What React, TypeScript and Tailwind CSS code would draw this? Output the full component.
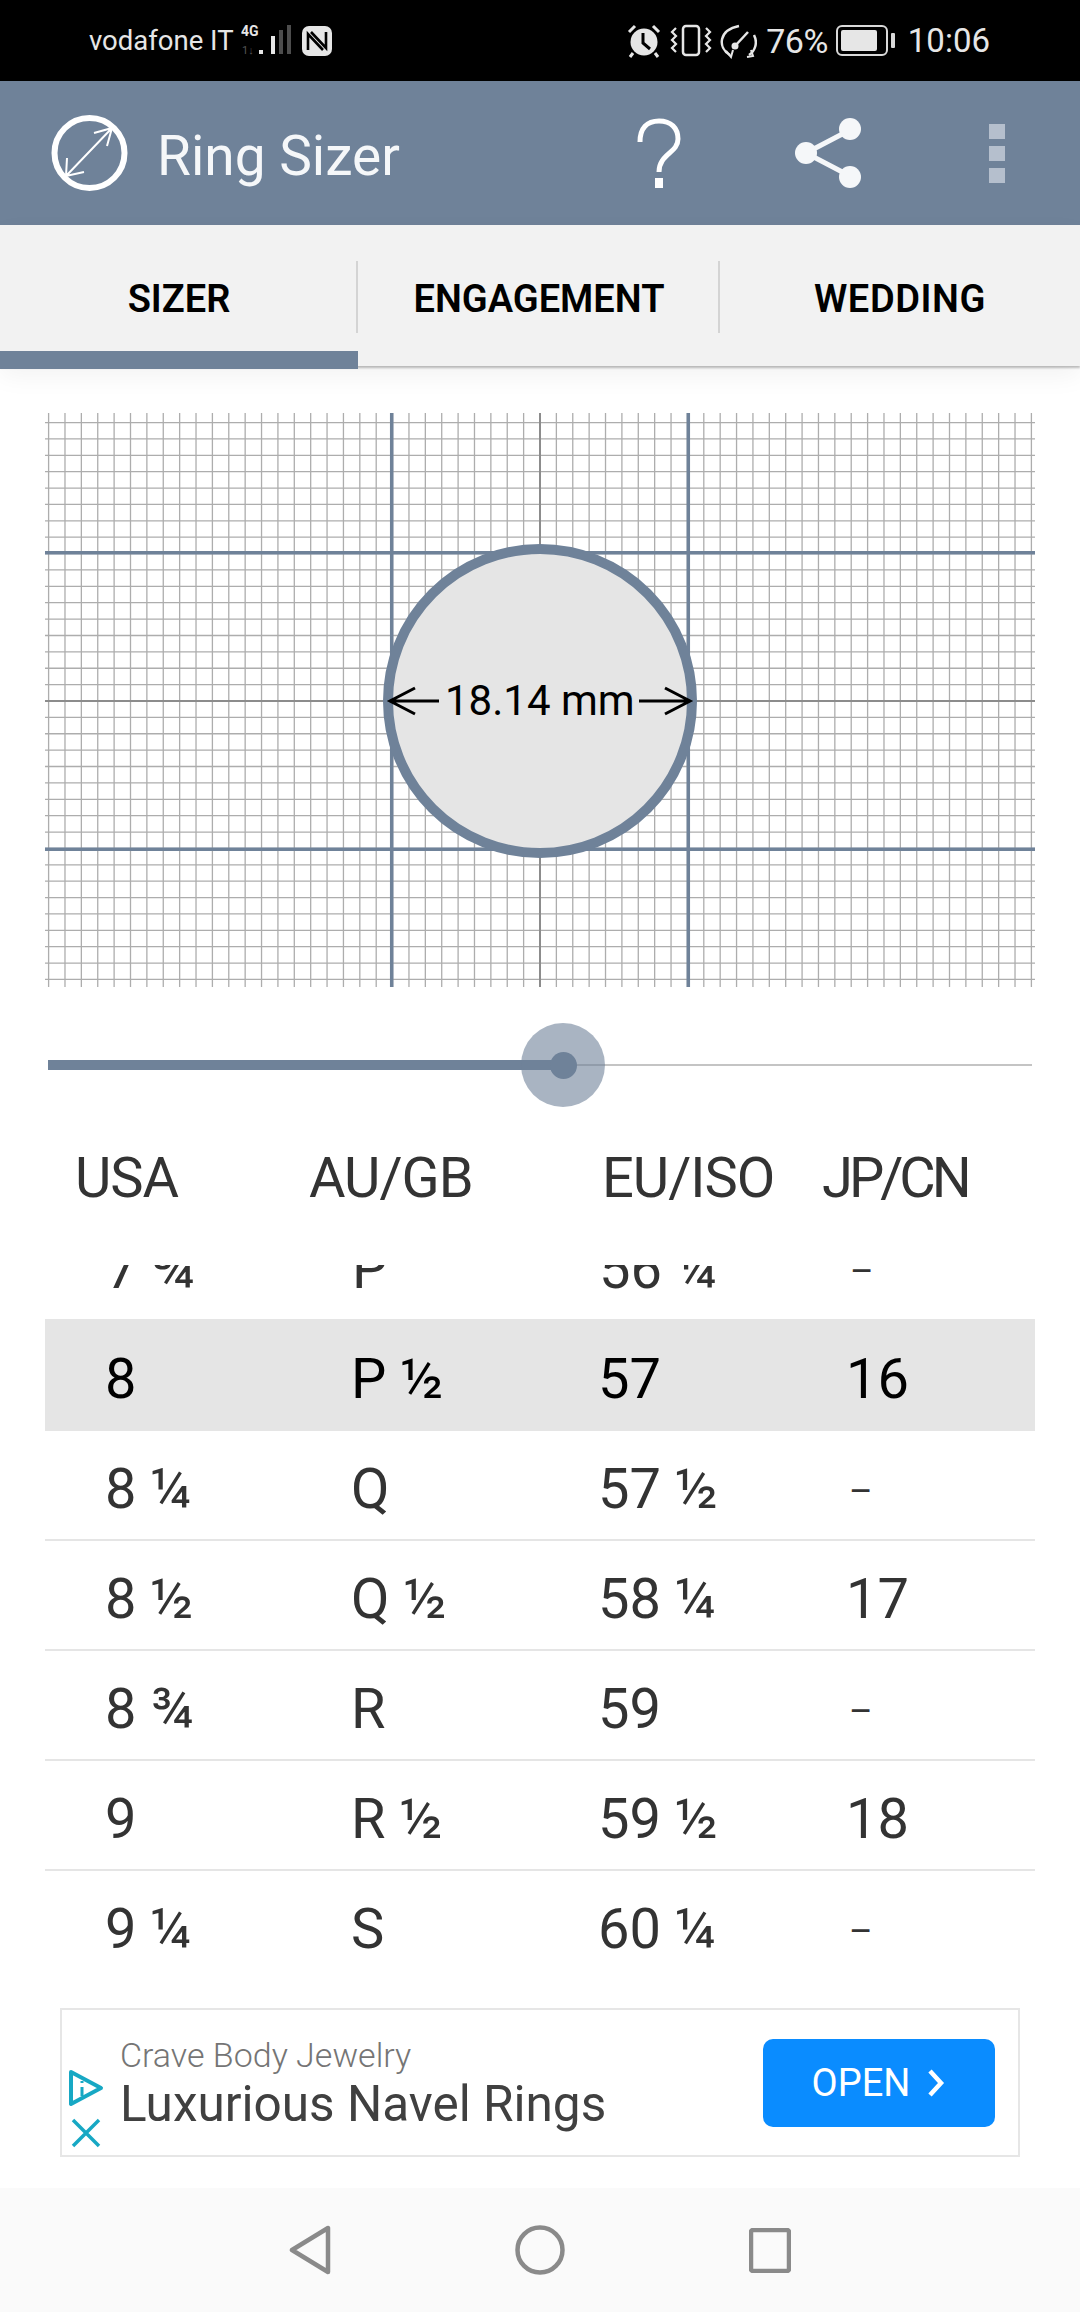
import React from 'react';

const SLATE = '#6f8299';

const rows = [
  { usa: '8', au: 'P ½', eu: '57', jp: '16', selected: true },
  { usa: '8 ¼', au: 'Q', eu: '57 ½', jp: '–' },
  { usa: '8 ½', au: 'Q ½', eu: '58 ¼', jp: '17' },
  { usa: '8 ¾', au: 'R', eu: '59', jp: '–' },
  { usa: '9', au: 'R ½', eu: '59 ½', jp: '18' },
  { usa: '9 ¼', au: 'S', eu: '60 ¼', jp: '–' },
];

// graph paper behind the ring, lines are counted out from the centre
const GridPaper: React.FC = () => {
  const w = 990;
  const h = 574;
  const cx = 495;
  const cy = 288;
  const step = 16.38;
  const major = 148.3;
  const minorX: number[] = [];
  const minorY: number[] = [];
  for (let i = -30; i <= 30; i++) minorX.push(cx + i * step);
  for (let i = -17; i <= 17; i++) minorY.push(cy + i * step);
  return (
    <svg width={w} height={h} viewBox={`0 0 ${w} ${h}`} className="block">
      {minorX.map(x => (
        <line key={x} x1={x} x2={x} y1={0} y2={h} stroke="#adadad" strokeWidth={1.3} />
      ))}
      {minorY.map(y => (
        <line key={y} x1={0} x2={w} y1={y} y2={y} stroke="#adadad" strokeWidth={1.3} />
      ))}
      <line x1={cx} x2={cx} y1={0} y2={h} stroke="#8c8c8c" strokeWidth={2} />
      <line x1={0} x2={w} y1={cy} y2={cy} stroke="#8c8c8c" strokeWidth={2} />
      <line x1={cx - major} x2={cx - major} y1={0} y2={h} stroke={SLATE} strokeWidth={3.5} />
      <line x1={cx + major} x2={cx + major} y1={0} y2={h} stroke={SLATE} strokeWidth={3.5} />
      <line x1={0} x2={w} y1={cy - major} y2={cy - major} stroke={SLATE} strokeWidth={3.5} />
      <line x1={0} x2={w} y1={cy + major} y2={cy + major} stroke={SLATE} strokeWidth={3.5} />
      <circle cx={cx} cy={cy} r={152} fill="#e5e5e5" stroke={SLATE} strokeWidth={10} />
      <path d="M 345 288 H 394 M 370 275 L 345 288 L 370 301 M 645 288 H 594 M 620 275 L 645 288 L 620 301" fill="none" stroke="#000" strokeWidth={3} />
    </svg>
  );
};

const StatusIcons: React.FC = () => (
  <svg width="130" height="36" viewBox="0 0 130 36" className="block" fill="none">
    {/* alarm */}
    <circle cx="17" cy="19" r="13.5" fill="#e6e6e6" />
    <path d="M16 10 V20 L23 26" stroke="#000" strokeWidth="3" />
    <path d="M2 9 L8 3 M32 9 L26 3 M6 30 L3 34 M28 30 L31 34" stroke="#e6e6e6" strokeWidth="3" />
    {/* vibrate */}
    <rect x="56" y="3" width="16" height="29" rx="3" stroke="#e6e6e6" strokeWidth="2.5" />
    <path d="M49 5 L45 9 L49 13 L45 17 L49 21 L45 25 L49 29 M79 5 L83 9 L79 13 L83 17 L79 21 L83 25 L79 29" stroke="#e6e6e6" strokeWidth="2.2" />
    {/* speed */}
    <path d="M103 32 C 90 24 92 7 112 3 M127 12 C 131 20 128 28 122 32" stroke="#e6e6e6" strokeWidth="2.5" />
    <path d="M99 28 L104 34 L106 27 M120 34 L126 33 L124 27" stroke="#e6e6e6" strokeWidth="2" />
    <circle cx="108" cy="23" r="3.5" fill="#e6e6e6" />
    <path d="M108 23 L121 9" stroke="#e6e6e6" strokeWidth="2.5" />
  </svg>
);

const App: React.FC = () => {
  return (
    <div className="w-[1080px] h-[2312px] overflow-hidden bg-white flex flex-col font-['Roboto',sans-serif]">
      {/* status bar */}
      <div className="h-[81px] shrink-0 bg-black flex items-center text-[#e6e6e6]">
        <div className="pl-[89px] flex items-center">
          <span className="text-[27.5px] leading-none">vodafone IT</span>
          <svg width="50" height="34" viewBox="0 0 50 34" className="ml-[7px]">
            <text x="0" y="12" fontSize="14" fontWeight="700" fill="#e6e6e6" fontFamily="Roboto, sans-serif">4G</text>
            <text x="1" y="30" fontSize="11" fill="#555" fontFamily="Roboto, sans-serif">1↓</text>
            <rect x="18" y="26" width="4" height="4" fill="#e6e6e6" />
            <rect x="30" y="12" width="4" height="18" fill="#e6e6e6" />
            <rect x="38" y="6" width="4" height="24" fill="#4d4d4d" />
            <rect x="46" y="1" width="4" height="29" fill="#4d4d4d" />
          </svg>
          <svg width="30" height="30" viewBox="0 0 30 30" className="ml-[11px]">
            <rect x="0" y="0" width="30" height="30" rx="7" fill="#e6e6e6" />
            <path d="M6 24 V8 L21 24 M24 6 V22 L9 6" fill="none" stroke="#000" strokeWidth="2.6" />
          </svg>
        </div>
        <div className="ml-auto pr-[90px] flex items-center">
          <StatusIcons />
          <span className="ml-[9px] text-[34px] leading-none tracking-[-0.5px]">76%</span>
          <div className="ml-[8px] w-[52px] h-[31px] border-2 border-[#d9d9d9] rounded-[6px] p-[3px]">
            <div className="w-[36px] h-full bg-[#e6e6e6] rounded-[2px]" />
          </div>
          <div className="ml-[3px] w-[4px] h-[15px] bg-[#d9d9d9] rounded-[1px]" />
          <span className="ml-[13px] text-[33px] leading-none">10:06</span>
        </div>
      </div>

      {/* action bar */}
      <div className="h-[144px] shrink-0 bg-[#6f8299] flex items-center text-white">
        <svg width="80" height="80" viewBox="0 0 80 80" className="ml-[50px]" fill="none">
          <circle cx="39.5" cy="40" r="35" stroke="#fff" strokeWidth="6" />
          <path d="M16 63 L62 15 M44 20 L62 15 L57 33 M17 45 L16 63 L34 59" stroke="#fff" strokeWidth="2" />
        </svg>
        <span className="ml-[27px] pt-[6px] text-[55px] leading-none text-[#f5f7f9]">Ring Sizer</span>
        <div className="ml-auto pr-[75px] flex items-center">
          <svg width="44" height="70" viewBox="0 0 44 70" fill="none">
            <path d="M3 24 C3 10 10 3 22 3 C34 3 41 10 41 21 C41 35 22 36 22 54" stroke="#fff" strokeWidth="5" />
            <rect x="18" y="60" width="8" height="10" fill="#fff" />
          </svg>
          <svg width="66" height="70" viewBox="0 0 66 70" className="ml-[114px]" fill="none">
            <path d="M55 12 L11 35 L55 58" stroke="#f5f7f9" strokeWidth="5" />
            <circle cx="55" cy="11" r="11" fill="#f5f7f9" />
            <circle cx="11" cy="35" r="11" fill="#f5f7f9" />
            <circle cx="55" cy="59" r="11" fill="#f5f7f9" />
          </svg>
          <div className="ml-[128px] flex flex-col gap-[7px]">
            <div className="w-[16px] h-[15px] bg-[#b5bfcd]" />
            <div className="w-[16px] h-[15px] bg-[#b5bfcd]" />
            <div className="w-[16px] h-[15px] bg-[#b5bfcd]" />
          </div>
        </div>
      </div>

      {/* tabs */}
      <div className="h-[141px] shrink-0 bg-[#f2f2f2] shadow-[0_2px_2px_rgba(0,0,0,0.25),0_10px_24px_rgba(0,0,0,0.05)] z-10 grid grid-cols-[358px_362px_1fr] relative">
        <div className="relative flex items-center justify-center pt-[6px]">
          <span className="text-[38px] font-semibold text-black leading-none">SIZER</span>
          <div className="absolute left-0 right-0 -bottom-[3px] h-[18px] bg-[#6f8299]" />
          <div className="absolute right-0 top-[36px] h-[72px] w-[2px] bg-[#d4d4d4]" />
        </div>
        <div className="relative flex items-center justify-center pt-[6px]">
          <span className="text-[38px] font-semibold text-black leading-none">ENGAGEMENT</span>
          <div className="absolute right-0 top-[36px] h-[72px] w-[2px] bg-[#d4d4d4]" />
        </div>
        <div className="flex items-center justify-center pt-[6px]">
          <span className="text-[38px] font-semibold text-black leading-none tracking-[0.6px]">WEDDING</span>
        </div>
      </div>

      {/* ring on the graph paper */}
      <div className="pt-[47px] pl-[45px] relative shrink-0">
        <GridPaper />
        <span className="absolute left-[445px] top-[308px] text-[42px] leading-[54px] text-black whitespace-nowrap">18.14 mm</span>
      </div>

      {/* slider */}
      <div className="relative h-[84px] mt-[36px] ml-[48px] w-[984px] shrink-0 flex items-center">
        <div className="h-[10px] w-[515px] bg-[#6f8299]" />
        <div className="h-[2px] flex-1 bg-[#c4c4c4]" />
        <div className="absolute left-[473px] top-0 w-[84px] h-[84px] rounded-full bg-[#6f8299]/60 flex items-center justify-center">
          <div className="w-[27px] h-[27px] rounded-full bg-[#6f8299]" />
        </div>
      </div>

      {/* column heads */}
      <div className="mt-[43px] h-[56px] shrink-0 relative text-[56px] leading-[56px] text-[#333]">
        <span className="absolute left-[75px] top-0 tracking-[-1px]">USA</span>
        <span className="absolute left-[309px] top-0 tracking-[-1px]">AU/GB</span>
        <span className="absolute left-[602px] top-0 tracking-[-1px]">EU/ISO</span>
        <span className="absolute left-[822px] top-0 tracking-[-4px]">JP/CN</span>
      </div>

      {/* list, scrolled so the first row is cut off */}
      <div className="mt-[59px] mx-[45px] h-[690px] overflow-hidden shrink-0">
        <div className="-mt-[54px]">
          <div className="h-[110px] pt-[8px] grid grid-cols-[246px_247px_248px_1fr] items-center border-b-2 border-[#e5e5e5] text-[56px] text-[#333] pl-[61px]">
            <span>7 ¾</span>
            <span>P</span>
            <span>56 ¼</span>
            <span className="text-[36px] pl-[3px] pt-[5px]">–</span>
          </div>
          {rows.map(r => (
            <div
              key={r.usa}
              className={r.selected
                ? 'h-[112px] pt-[8px] -mt-[2px] grid grid-cols-[246px_247px_248px_1fr] items-center bg-[#e5e5e5] text-[56px] text-black pl-[60px]'
                : 'h-[110px] pt-[8px] grid grid-cols-[246px_247px_248px_1fr] items-center border-b-2 border-[#e5e5e5] text-[56px] text-[#333] pl-[60px]'}
            >
              <span>{r.usa}</span>
              <span>{r.au}</span>
              <span>{r.eu}</span>
              {r.jp === '–' ? <span className="text-[36px] pl-[3px] pt-[5px]">–</span> : <span>{r.jp}</span>}
            </div>
          ))}
        </div>
      </div>

      {/* ad */}
      <div className="mt-[53px] mx-[60px] h-[149px] shrink-0 border-2 border-[#e6e6e6] bg-white flex items-center relative">
        <svg width="36" height="78" viewBox="0 0 36 78" className="absolute left-[7px] top-[60px]" fill="none">
          <path d="M2 2 L32 18 L2 34 Z" stroke="#17a8c4" strokeWidth="4" strokeLinejoin="round" />
          <path d="M13 11 V13 M13 17 V26" stroke="#17a8c4" strokeWidth="3" />
          <path d="M4 50 L30 76 M30 50 L4 76" stroke="#17a8c4" strokeWidth="3.5" />
        </svg>
        <div className="ml-[58px] flex flex-col">
          <span className="text-[34px] leading-[42px] text-[#757575] font-light">Crave Body Jewelry</span>
          <span className="text-[49.5px] leading-[56px] text-[#404040]">Luxurious Navel Rings</span>
        </div>
        <div className="absolute left-[701px] top-[29px] w-[232px] h-[88px] rounded-[10px] bg-[#0a8cff] flex items-center justify-center text-white">
          <span className="text-[38px] leading-none">OPEN</span>
          <svg width="20" height="30" viewBox="0 0 20 30" className="ml-[16px]" fill="none">
            <path d="M4 3 L15 15 L4 27" stroke="#fff" strokeWidth="4.5" />
          </svg>
        </div>
      </div>

      {/* nav bar */}
      <div className="mt-[31px] flex-1 bg-[#fafafa] flex items-center justify-center gap-[184px]">
        <svg width="42" height="50" viewBox="0 0 42 50" fill="none">
          <path d="M39 3 V47 L3 25 Z" stroke="#8a8a8a" strokeWidth="4.5" strokeLinejoin="round" />
        </svg>
        <svg width="50" height="50" viewBox="0 0 50 50" fill="none">
          <circle cx="25" cy="25" r="22.5" stroke="#8a8a8a" strokeWidth="4.5" />
        </svg>
        <svg width="42" height="45" viewBox="0 0 42 45" fill="none">
          <rect x="2" y="2" width="38" height="41" rx="2" stroke="#8a8a8a" strokeWidth="4.5" />
        </svg>
      </div>
    </div>
  );
};

export default App;
